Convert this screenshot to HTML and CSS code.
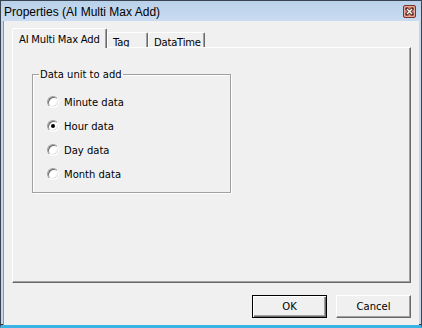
FILE: index.html
```html
<!DOCTYPE html>
<html lang="en">
<head>
  <meta charset="UTF-8">
  <title>Properties (AI Multi Max Add)</title>
  <link rel="stylesheet" href="styles.css">
</head>
<body>
  <div class="window">
    <div class="titlebar">
      <span class="title">Properties (AI Multi Max Add)</span>
      <span class="close">
        <svg width="13" height="13" viewBox="0 0 13 13">
          <rect x="0.5" y="0.5" width="12" height="12" rx="1.5" fill="#d4806d" stroke="#7a3325"/>
          <rect x="1.5" y="1.5" width="10" height="10" rx="1" fill="none" stroke="#e9ad9f"/>
          <path d="M4 4 L9 9 M9 4 L4 9" stroke="#4b2a24" stroke-width="3" stroke-linecap="square"/>
          <path d="M4 4 L9 9 M9 4 L4 9" stroke="#ffffff" stroke-width="1.4"/>
        </svg>
      </span>
    </div>

    <div class="client">
      <div class="tabs">
        <div class="tab active">AI Multi Max Add</div>
        <div class="tab tab-tag">Tag</div>
        <div class="tab tab-time">DataTime</div>
      </div>

      <div class="panel">
        <fieldset class="group">
          <legend>Data unit to add</legend>
          <div class="options">
            <label class="option"><span class="radio"></span>Minute data</label>
            <label class="option"><span class="radio checked"></span>Hour data</label>
            <label class="option"><span class="radio"></span>Day data</label>
            <label class="option"><span class="radio"></span>Month data</label>
          </div>
        </fieldset>
      </div>

      <div class="buttons">
        <button class="btn default">OK</button>
        <button class="btn">Cancel</button>
      </div>
    </div>
  </div>
</body>
</html>
```

FILE: styles.css
```css
body {
  margin: 0;
  font-family: "DejaVu Sans", Tahoma, sans-serif;
  font-size: 10px;
  color: #000;
}
.window {
  box-sizing: border-box;
  width: 422px;
  height: 328px;
  border: 1px solid #3a4450;
  background: #c2d7ee;
  padding: 0 2px;
  display: flex;
  flex-direction: column;
  border-bottom: 3px solid #3ab4e4;
  box-shadow: inset 0 -1px 0 #2b3640;
}
.titlebar {
  height: 20px;
  margin: 0 -2px;
  padding: 0 5px 0 3px;
  background: linear-gradient(#b9d1ea, #cadcf0);
  display: flex;
  align-items: center;
  justify-content: space-between;
}
.title {
  font-family: "Liberation Sans", Arial, sans-serif;
  font-size: 12px;
  line-height: 14px;
  margin-top: 1px;
}
.close {
  display: flex;
  margin-top: 1px;
}
.client {
  flex: 1;
  background: #f0f0f0;
  border-left: 1px solid #8c9aa8;
  padding: 7px 8px 0 8px;
  display: flex;
  flex-direction: column;
}

/* tabs */
.tabs {
  display: flex;
  align-items: flex-end;
  height: 20px;
}
.tab {
  box-sizing: border-box;
  height: 16px;
  padding: 3px 0 0 5px;
  line-height: 13px;
  letter-spacing: -0.2px;
  border-top: 1px solid #fff;
  border-left: 1px solid #fff;
  border-right: 1px solid #696969;
  box-shadow: inset -1px 0 0 #a0a0a0;
  border-radius: 2px 2px 0 0;
  overflow: hidden;
  white-space: nowrap;
}
.tab.active {
  width: 95px;
  height: 20px;
  padding: 4px 0 0 6px;
  background: #f0f0f0;
  position: relative;
  z-index: 2;
}
.tab-tag {
  width: 41px;
}
.tab-time {
  width: 57px;
}

.panel {
  box-sizing: border-box;
  height: 236px;
  margin-top: -1px;
  background: #f0f0f0;
  border-top: 1px solid #fff;
  border-left: 1px solid #fff;
  border-right: 1px solid #696969;
  border-bottom: 1px solid #696969;
  box-shadow: inset -1px -1px 0 #a0a0a0;
  position: relative;
  z-index: 1;
  padding: 20px 0 0 19px;
}

/* group box */
.group {
  box-sizing: border-box;
  width: 199px;
  height: 125px;
  margin: 0;
  padding: 0 0 0 14px;
  border: 1px solid #a0a0a0;
  box-shadow: 1px 1px 0 #fff, inset 1px 1px 0 #fff;
}
.group legend {
  padding: 0 1px;
  margin-left: -8px;
  line-height: 13px;
}
.options {
  margin-top: 9px;
  display: flex;
  flex-direction: column;
}
.option {
  height: 24px;
  display: flex;
  align-items: center;
}
.radio {
  box-sizing: border-box;
  width: 12px;
  height: 12px;
  border-radius: 50%;
  border: 1px solid;
  border-color: #a0a0a0 #fff #fff #a0a0a0;
  box-shadow: inset 1px 1px 0 #696969, inset -1px -1px 0 #e3e3e3;
  background: #fff;
  margin-right: 5px;
  display: flex;
  align-items: center;
  justify-content: center;
}
.radio.checked::after {
  content: "";
  width: 4px;
  height: 4px;
  border-radius: 50%;
  background: #000;
}

/* buttons */
.buttons {
  display: flex;
  justify-content: flex-end;
  gap: 9px;
  margin-top: 12px;
}
.btn {
  box-sizing: border-box;
  width: 75px;
  height: 23px;
  margin: 0;
  padding: 0;
  font-family: "DejaVu Sans", Tahoma, sans-serif;
  font-size: 10px;
  color: #000;
  background: #f0f0f0;
  border: 1px solid;
  border-color: #fff #696969 #696969 #fff;
  box-shadow: inset -1px -1px 0 #a0a0a0;
}
.btn.default {
  border: 1px solid #000;
  box-shadow: inset 1px 1px 0 #fff, inset -1px -1px 0 #696969, inset -2px -2px 0 #a0a0a0;
}
```
